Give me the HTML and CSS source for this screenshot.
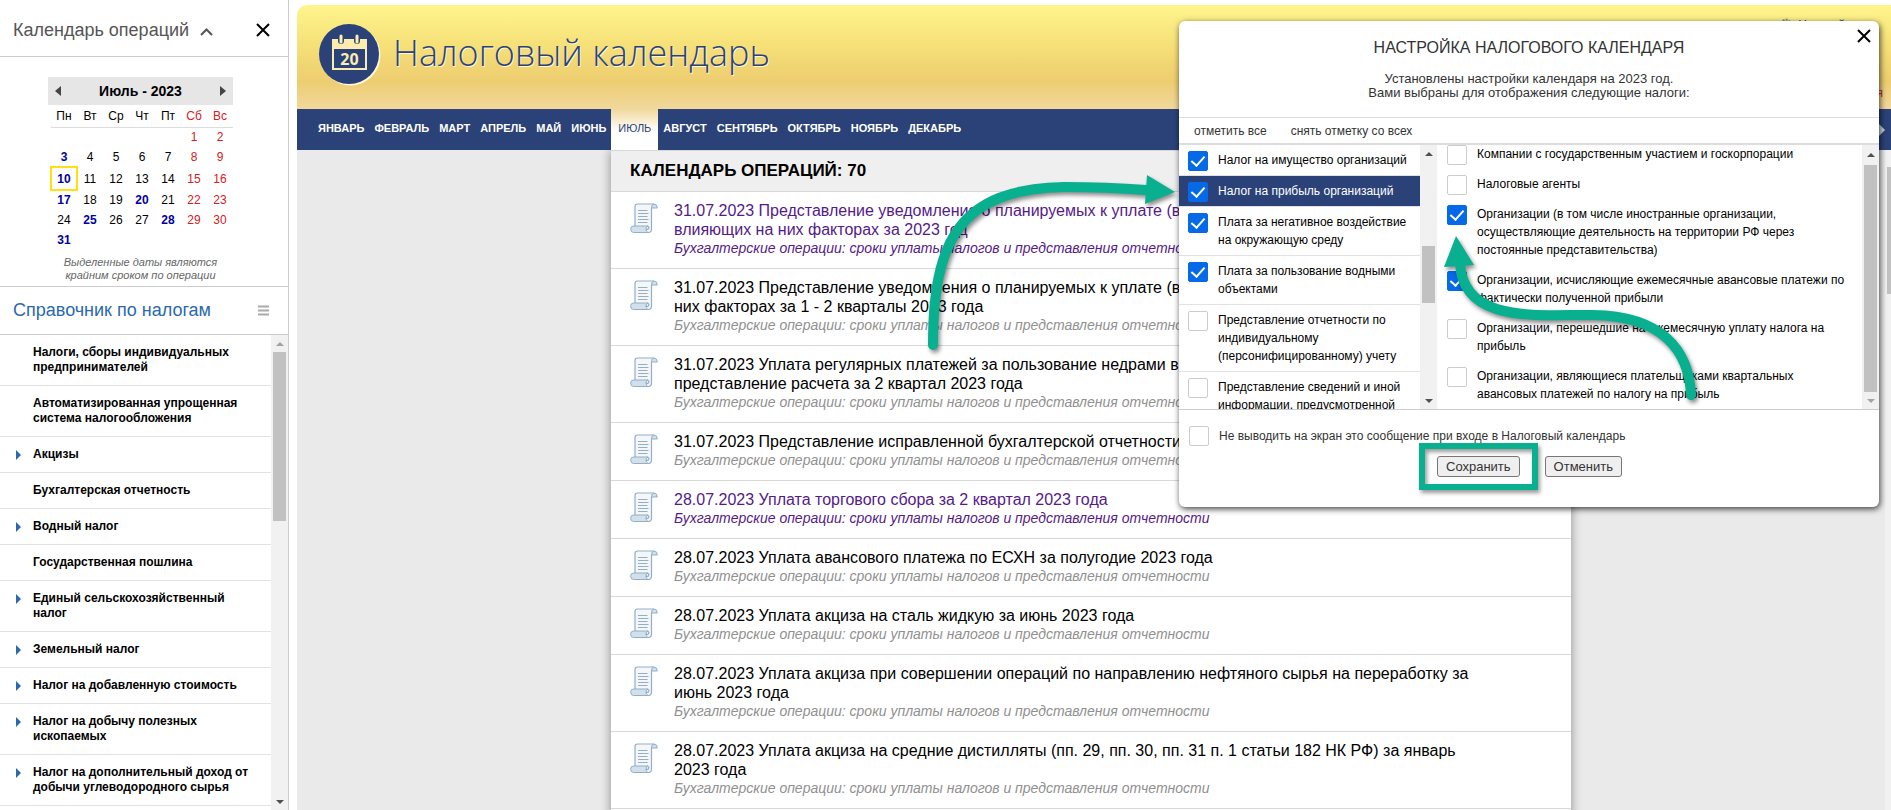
FILE: index.html
```html
<!DOCTYPE html>
<html lang="ru">
<head>
<meta charset="utf-8">
<title>Налоговый календарь</title>
<link rel="stylesheet" href="styles.css">
</head>
<body>
<svg class="defs" aria-hidden="true">
  <symbol id="scroll" viewBox="0 0 28 30">
    <path d="M5 24V3.5Q5 1 7.5 1H24Q21.500 1 21.500 4V26Q21.500 29 18 29L8 24Z" fill="#f6f6f6"/>
    <path d="M24 1Q21.500 1 21.500 5H27.300Q27.300 1 24 1Z" fill="#d3e0ea" stroke="#8fb0cb"/>
    <path d="M3.500 23H18Q16 23.500 16 26T18 29.500H3.500Q0.700 29.500 0.700 26.200T3.500 23Z" fill="#d3e0ea" stroke="#8fb0cb"/>
    <path d="M5 23V3.500Q5 1 7.500 1H24M21.500 5V26Q21.500 29.500 18 29.500M16 26Q18 27.500 19 24.500Q18.500 23 17 23" fill="none" stroke="#8fb0cb" stroke-width="1.200"/>
    <path d="M8 7.500H17.500M8 10.500H18.500M8 13.500H17.500M8 16.500H18.500M8 19.500H17.500" stroke="#8fb0cb" fill="none"/>
  </symbol>
  <symbol id="cross" viewBox="0 0 16 16"><path d="M2 2L14 14M14 2L2 14" stroke="#000" stroke-width="2" fill="none"/></symbol>
</svg>

<aside class="sidebar">
  <div class="side-head">
    <h2>Календарь операций</h2>
    <svg class="caret" viewBox="0 0 13 8"><path d="M1 7L6.500 1.500L12 7" fill="none" stroke="#555" stroke-width="2"/></svg>
    <button class="icon-btn side-close" aria-label="Закрыть"><svg width="16" height="16"><use href="#cross"/></svg></button>
  </div>
  <section class="calendar">
    <div class="cal-bar">
      <button class="icon-btn" aria-label="Предыдущий месяц"><svg width="6" height="10"><path d="M6 0V10L0 5Z" fill="#444"/></svg></button>
      <b>Июль - 2023</b>
      <button class="icon-btn" aria-label="Следующий месяц"><svg width="6" height="10"><path d="M0 0V10L6 5Z" fill="#444"/></svg></button>
    </div>
    <table class="cal">
      <thead><tr><th>Пн</th><th>Вт</th><th>Ср</th><th>Чт</th><th>Пт</th><th class="off">Сб</th><th class="off">Вс</th></tr></thead>
      <tbody>
      <tr><td></td><td></td><td></td><td></td><td></td><td class="off">1</td><td class="off">2</td></tr>
      <tr><td class="due">3</td><td>4</td><td>5</td><td>6</td><td>7</td><td class="off">8</td><td class="off">9</td></tr>
      <tr class="week-now"><td class="due today">10</td><td>11</td><td>12</td><td>13</td><td>14</td><td class="off">15</td><td class="off">16</td></tr>
      <tr><td class="due">17</td><td>18</td><td>19</td><td class="due">20</td><td>21</td><td class="off">22</td><td class="off">23</td></tr>
      <tr><td>24</td><td class="due">25</td><td>26</td><td>27</td><td class="due">28</td><td class="off">29</td><td class="off">30</td></tr>
      <tr><td class="due">31</td><td></td><td></td><td></td><td></td><td></td><td></td></tr>
      </tbody>
    </table>
    <p class="cal-note">Выделенные даты являются<br>крайним сроком по операции</p>
  </section>
  <div class="ref-head">
    <h2><a href="#">Справочник по налогам</a></h2>
    <svg width="12" height="11"><path d="M0 1.500H11M0 5.500H11M0 9.500H11" stroke="#aaa" stroke-width="2"/></svg>
  </div>
  <div class="ref-body">
    <ul class="ref-list">
      <li><a href="#">Налоги, сборы индивидуальных предпринимателей</a></li>
      <li><a href="#">Автоматизированная упрощенная система налогообложения</a></li>
      <li class="sub"><a href="#">Акцизы</a></li>
      <li><a href="#">Бухгалтерская отчетность</a></li>
      <li class="sub"><a href="#">Водный налог</a></li>
      <li><a href="#">Государственная пошлина</a></li>
      <li class="sub"><a href="#">Единый сельскохозяйственный налог</a></li>
      <li class="sub"><a href="#">Земельный налог</a></li>
      <li class="sub"><a href="#">Налог на добавленную стоимость</a></li>
      <li class="sub"><a href="#">Налог на добычу полезных ископаемых</a></li>
      <li class="sub"><a href="#">Налог на дополнительный доход от добычи углеводородного сырья</a></li>
      <li></li>
    </ul>
    <div class="bar bar-ref"><i class="up dim"></i><i class="thumb"></i><i class="down"></i></div>
  </div>
</aside>

<main class="main">
  <header class="top">
    <svg class="logo" viewBox="0 0 62 62">
      <circle cx="31.500" cy="31.500" r="30" fill="#fff8d8"/>
      <circle cx="30" cy="30" r="30" fill="#2b4279"/>
      <path d="M13 15H19V17A3 3 0 0 0 25 17V15H35V17A3 3 0 0 0 41 17V15H48V46H13ZM15 25V44H46V25Z" fill="#fcecb0" fill-rule="evenodd"/>
      <path d="M22 12V18M38 12V18" stroke="#fcecb0" stroke-width="3" stroke-linecap="round"/>
      <text x="30.500" y="41" text-anchor="middle" class="logo-num">20</text>
    </svg>
    <h1>Налоговый календарь</h1>
    <div class="top-links">
      <a class="setup" href="#"><svg width="12" height="12" viewBox="0 0 12 12"><circle cx="6" cy="6" r="4" fill="none" stroke="#999" stroke-width="3" stroke-dasharray="2 1"/></svg>Настройки</a>
      <a class="alert" href="#">я</a>
    </div>
  </header>
  <nav class="months">
    <a href="#">ЯНВАРЬ</a><a href="#">ФЕВРАЛЬ</a><a href="#">МАРТ</a><a href="#">АПРЕЛЬ</a><a href="#">МАЙ</a><a href="#">ИЮНЬ</a><a href="#" class="on">ИЮЛЬ</a><a href="#">АВГУСТ</a><a href="#">СЕНТЯБРЬ</a><a href="#">ОКТЯБРЬ</a><a href="#">НОЯБРЬ</a><a href="#">ДЕКАБРЬ</a>
    <span class="next"><svg width="6" height="12"><path d="M0 0L6 6L0 12Z" fill="#c9d0e0"/></svg></span>
  </nav>
  <div class="stage">
    <section class="sheet">
      <h3>КАЛЕНДАРЬ ОПЕРАЦИЙ: 70</h3>
      <a href="#" class="op seen"><svg><use href="#scroll"/></svg><span class="op-text">31.07.2023 Представление уведомления о планируемых к уплате (возмещению) суммах и<br>влияющих на них факторах за 2023 год<em>Бухгалтерские операции: сроки уплаты налогов и представления отчетности</em></span></a>
      <a href="#" class="op"><svg><use href="#scroll"/></svg><span class="op-text">31.07.2023 Представление уведомления о планируемых к уплате (возмещению) суммах и<br>них факторах за 1 - 2 кварталы 2023 года<em>Бухгалтерские операции: сроки уплаты налогов и представления отчетности</em></span></a>
      <a href="#" class="op"><svg><use href="#scroll"/></svg><span class="op-text">31.07.2023 Уплата регулярных платежей за пользование недрами в РФ и<br>представление расчета за 2 квартал 2023 года<em>Бухгалтерские операции: сроки уплаты налогов и представления отчетности</em></span></a>
      <a href="#" class="op"><svg><use href="#scroll"/></svg><span class="op-text">31.07.2023 Представление исправленной бухгалтерской отчетности<em>Бухгалтерские операции: сроки уплаты налогов и представления отчетности</em></span></a>
      <a href="#" class="op seen"><svg><use href="#scroll"/></svg><span class="op-text">28.07.2023 Уплата торгового сбора за 2 квартал 2023 года<em>Бухгалтерские операции: сроки уплаты налогов и представления отчетности</em></span></a>
      <a href="#" class="op"><svg><use href="#scroll"/></svg><span class="op-text">28.07.2023 Уплата авансового платежа по ЕСХН за полугодие 2023 года<em>Бухгалтерские операции: сроки уплаты налогов и представления отчетности</em></span></a>
      <a href="#" class="op"><svg><use href="#scroll"/></svg><span class="op-text">28.07.2023 Уплата акциза на сталь жидкую за июнь 2023 года<em>Бухгалтерские операции: сроки уплаты налогов и представления отчетности</em></span></a>
      <a href="#" class="op"><svg><use href="#scroll"/></svg><span class="op-text">28.07.2023 Уплата акциза при совершении операций по направлению нефтяного сырья на переработку за<br>июнь 2023 года<em>Бухгалтерские операции: сроки уплаты налогов и представления отчетности</em></span></a>
      <a href="#" class="op"><svg><use href="#scroll"/></svg><span class="op-text">28.07.2023 Уплата акциза на средние дистилляты (пп. 29, пп. 30, пп. 31 п. 1 статьи 182 НК РФ) за январь<br>2023 года<em>Бухгалтерские операции: сроки уплаты налогов и представления отчетности</em></span></a>
      <div class="op"></div>
    </section>
    <div class="edge"><i></i></div>
  </div>
</main>

<div class="dialog" role="dialog" aria-labelledby="dlg-title">
  <button class="icon-btn dlg-close" aria-label="Закрыть"><svg width="16" height="16"><use href="#cross"/></svg></button>
  <div class="dlg-head">
    <h2 id="dlg-title">НАСТРОЙКА НАЛОГОВОГО КАЛЕНДАРЯ</h2>
    <p>Установлены настройки календаря на 2023 год.<br>Вами выбраны для отображения следующие налоги:</p>
  </div>
  <div class="dlg-tools"><button>отметить все</button><button>снять отметку со всех</button></div>
  <div class="dlg-body">
    <div class="taxes">
      <label><input type="checkbox" checked><span>Налог на имущество организаций</span></label>
      <label class="picked"><input type="checkbox" checked><span>Налог на прибыль организаций</span></label>
      <label><input type="checkbox" checked><span>Плата за негативное воздействие на окружающую среду</span></label>
      <label><input type="checkbox" checked><span>Плата за пользование водными объектами</span></label>
      <label><input type="checkbox"><span>Представление отчетности по индивидуальному (персонифицированному) учету</span></label>
      <label><input type="checkbox"><span>Представление сведений и иной информации, предусмотренной</span></label>
    </div>
    <div class="bar bar-taxes"><i class="up"></i><i class="thumb"></i><i class="down"></i></div>
    <div class="payers">
      <label><input type="checkbox"><span>Компании с государственным участием и госкорпорации</span></label>
      <label><input type="checkbox"><span>Налоговые агенты</span></label>
      <label><input type="checkbox" checked><span>Организации (в том числе иностранные организации, осуществляющие деятельность на территории РФ через постоянные представительства)</span></label>
      <label><input type="checkbox" checked><span>Организации, исчисляющие ежемесячные авансовые платежи по фактически полученной прибыли</span></label>
      <label><input type="checkbox"><span>Организации, перешедшие на ежемесячную уплату налога на прибыль</span></label>
      <label><input type="checkbox"><span>Организации, являющиеся плательщиками квартальных авансовых платежей по налогу на прибыль</span></label>
    </div>
    <div class="bar bar-payers"><i class="up"></i><i class="thumb"></i><i class="down dim"></i></div>
  </div>
  <div class="dlg-foot">
    <label class="mute"><input type="checkbox"><span>Не выводить на экран это сообщение при входе в Налоговый календарь</span></label>
    <div class="dlg-actions">
      <div class="save-mark"><button class="push">Сохранить</button></div>
      <button class="push">Отменить</button>
    </div>
  </div>
  <svg class="arrows" viewBox="900 21 979 486" aria-hidden="true">
    <g fill="none" stroke="#08b090" stroke-width="10" stroke-linecap="round">
      <path d="M933 345C933 240 960 189 1064 187C1095 187 1120 188 1146 190"/>
      <path d="M1691 395C1689 350 1662 316 1593 315C1540 314 1462 325 1460 262"/>
    </g>
    <path d="M1147 175L1175 192L1145 204ZM1456 236L1474 265L1444 267Z" fill="#08b090"/>
  </svg>
</div>
</body>
</html>
```

FILE: styles.css
```css
* { box-sizing: border-box; }

body {
  margin: 0;
  height: 100vh;
  display: flex;
  overflow: hidden;
  position: relative;
  background: #fff;
  color: #000;
  font-family: "Liberation Sans", Arial, sans-serif;
  font-size: 12px;
}

h1, h2, h3, p, ul { margin: 0; padding: 0; }
a { color: inherit; text-decoration: none; }
.defs { display: none; }

.icon-btn {
  display: flex;
  padding: 0;
  border: 0;
  background: none;
}

/* Sidebar */
.sidebar {
  flex: 0 0 289px;
  display: flex;
  flex-direction: column;
  border-right: 1px solid #ccc;
}

.side-head, .ref-head {
  flex: none;
  display: flex;
  align-items: center;
  padding: 0 18px 0 13px;
  border-bottom: 1px solid #ccc;
}
.side-head { height: 57px; padding-top: 4px; padding-right: 17px; }
.side-head h2, .ref-head h2 { font-size: 18px; font-weight: 400; color: #555; }
.ref-head { height: 48px; justify-content: space-between; }
.ref-head h2 { color: #2a69ad; }
.caret { width: 13px; height: 8px; margin: 3px 0 0 11px; }
.side-close { margin-left: auto; }

.calendar {
  flex: none;
  height: 230px;
  padding: 20px 55px 0 48px;
  border-bottom: 1px solid #ccc;
}
.cal-bar {
  display: flex;
  align-items: center;
  justify-content: space-between;
  height: 28px;
  padding: 0 7px;
  background: #e6e6e6;
  font-size: 14px;
}
.cal { width: 182px; margin-left: auto; table-layout: fixed; border-collapse: collapse; text-align: center; }
.cal th { height: 22px; padding: 0; font-weight: 400; border-bottom: 1px solid #ddd; }
.cal td { height: 20px; padding: 0; }
.cal .week-now td { height: 23px; }
.cal .off { color: #d42020; }
.cal .due { color: #0000a0; font-weight: 700; }
.cal .today { outline: 2px solid #ffe011; outline-offset: -1px; }
.cal-note {
  padding-top: 6px;
  font-size: 11px;
  line-height: 13px;
  font-style: italic;
  color: #666;
  text-align: center;
  white-space: nowrap;
}

.ref-body { flex: 1; min-height: 0; display: flex; }
.ref-list { flex: 1; overflow: hidden; list-style: none; font-weight: 700; line-height: 15px; }
.ref-list li { padding: 10px 14px 10px 33px; border-bottom: 1px solid #e2e2e2; position: relative; }
.ref-list .sub::before {
  content: "";
  position: absolute;
  left: 16px;
  top: 13px;
  border: 5px solid transparent;
  border-left-color: #2a69ad;
  border-right: 0;
}

/* Scroll bars */
.bar {
  flex: none;
  width: 17px;
  display: grid;
  justify-items: center;
  align-items: center;
  background: #f1f1f1;
}
.bar-ref { grid-template-rows: 17px 169px 1fr 17px; }
.bar-taxes { grid-template-rows: 17px 84px 57px 1fr 17px; }
.bar-payers { grid-template-rows: 20px 1fr 17px; }
.thumb { width: 13px; height: 100%; background: #c1c1c1; }
.bar-taxes .thumb { grid-row: 3; }
.up, .down { border: 4px solid transparent; }
.up { grid-row: 1; border-top: 0; border-bottom-color: #505050; }
.down { grid-row: -2; border-bottom: 0; border-top-color: #505050; }
.up.dim { border-bottom-color: #a3a3a3; }
.down.dim { border-top-color: #a3a3a3; }

/* Main area */
.main {
  flex: 1;
  min-width: 0;
  margin: 5px 0 0 8px;
  display: flex;
  flex-direction: column;
  border-radius: 10px 0 0 0;
  overflow: hidden;
  background: linear-gradient(#fff58c 0, #f6e078 40px, #edcd70 76px, #f1d89c 104px, #fff 126px);
}
.top { flex: none; height: 104px; display: flex; align-items: center; padding: 0 0 4px 22px; position: relative; }
.logo { width: 62px; height: 62px; }
.logo-num { font: 700 16px "Open Sans", sans-serif; fill: #fcecb0; }
.top h1 {
  margin-left: 12px;
  padding-bottom: 4px;
  font: 300 36px/50px "Open Sans", sans-serif;
  color: #2b4279;
  text-shadow: 1px 1px 0 #fff8d8;
  white-space: nowrap;
}
.top-links {
  margin-left: auto;
  align-self: stretch;
  display: flex;
  flex-direction: column;
  justify-content: space-between;
  align-items: flex-end;
  padding: 13px 8px 5px 0;
}
.setup { display: flex; gap: 6px; padding-right: 26px; color: #2b4279; }
.alert { color: #d42020; }

.months {
  flex: none;
  height: 41px;
  display: flex;
  font-size: 11px;
  font-weight: 700;
  line-height: 38px;
  color: #fff;
}
.months a { padding: 0 5px; background: #2b4279; }
.months a:first-child { padding-left: 21px; }
.months .on { background: none; color: #2b4279; font-weight: 400; padding: 0 7px; }
.next {
  flex: 1;
  display: flex;
  align-items: center;
  justify-content: flex-end;
  padding-right: 6px;
  background: #2b4279;
}

.stage {
  flex: 1;
  min-height: 0;
  display: flex;
  background: #eaeaea;
  overflow: hidden;
}
.sheet {
  width: 960px;
  margin: 0 auto;
  background: #fff;
  box-shadow: 0 0 10px rgba(0, 0, 0, .4);
  height: max-content;
}
.sheet h3 {
  height: 42px;
  padding-left: 19px;
  font-size: 17px;
  line-height: 40px;
  background: #efefef;
  border-top: 1px solid #d8d8d8;
  border-bottom: 1px solid #d8d8d8;
}
.op { display: flex; padding: 9px 0 10px 19px; min-height: 58px; border-bottom: 1px solid #d8d8d8; }
.op svg { flex: none; width: 28px; height: 30px; margin: 2px 16px 0 0; }
.op-text { font-size: 16px; line-height: 19px; white-space: nowrap; }
.op em { display: block; font-size: 14px; color: #909090; }
.op.seen, .op.seen em { color: #551a8b; }
.edge { flex: none; width: 6px; background: #f1f1f1; padding: 17px 0 0 2px; }
.edge i { display: block; height: 127px; background: #c1c1c1; }

/* Settings dialog */
.dialog {
  position: absolute;
  top: 21px;
  right: 12px;
  width: 700px;
  background: #fff;
  border-radius: 6px;
  box-shadow: 1px 2px 6px rgba(0, 0, 0, .75);
  color: #333;
}
.dlg-close { position: absolute; top: 7px; right: 7px; }
.dlg-head { padding: 17px 0; text-align: center; font-size: 13px; line-height: 14px; border-bottom: 1px solid #ddd; }
.dlg-head h2 { font-size: 16px; font-weight: 400; line-height: 19px; margin-bottom: 15px; }
.dlg-tools { display: flex; gap: 24px; padding: 0 15px; height: 27px; border-bottom: 2px solid #ddd; }
.dlg-tools button { padding: 0; border: 0; background: none; font: inherit; color: inherit; }

.dlg-body { display: flex; height: 265px; border-bottom: 1px solid #ccc; color: #000; line-height: 18px; }
.taxes { flex: 0 0 241px; overflow: hidden; }
.payers { flex: 1; overflow: hidden; display: flex; flex-direction: column; justify-content: flex-end; }
.dialog label { display: flex; gap: 10px; padding: 6px 9px; }
.taxes label { border-bottom: 1px solid #e2e2e2; }
.payers label { flex: none; padding: 6px 10px; min-height: 30px; }
.payers label input { margin-bottom: -2px; }
.taxes label input { margin-bottom: -2px; }
.taxes .picked { background: #2b4279; color: #fff; }

.dialog input {
  flex: none;
  appearance: none;
  width: 20px;
  height: 20px;
  margin: 0;
  border: 1px solid #ccc;
  border-radius: 2px;
  background: #fff;
  display: grid;
  place-items: center;
}
.dialog input:checked { background: #0569e8; border-color: #0569e8; }
.dialog input:checked::before {
  content: "";
  width: 6px;
  height: 11px;
  margin-bottom: 3px;
  border: solid #fff;
  border-width: 0 2px 2px 0;
  transform: rotate(42deg);
}

.dlg-foot { height: 97px; padding-top: 10px; line-height: 20px; }
.dialog .mute { padding: 6px 10px 0; }
.dlg-actions { display: flex; gap: 7px; align-items: flex-start; padding: 0 0 0 240px; margin-top: -3px; }
.save-mark { padding: 7px 12px; border: 6px solid #08b090; box-shadow: 2px 3px 4px rgba(0, 0, 0, .4), inset 2px 3px 4px rgba(0, 0, 0, .4); }
.push {
  height: 21px;
  padding: 0 8px;
  border: 1px solid #767676;
  border-radius: 3px;
  background: #efefef;
  color: #333;
  font: 13px/19px "Liberation Sans", Arial, sans-serif;
  display: block;
}
.dlg-actions > .push { margin-top: 13px; }

.arrows {
  position: absolute;
  top: 0;
  right: 0;
  width: 979px;
  height: 486px;
  pointer-events: none;
  filter: drop-shadow(2px 3px 2px rgba(0, 0, 0, .45));
}
```
